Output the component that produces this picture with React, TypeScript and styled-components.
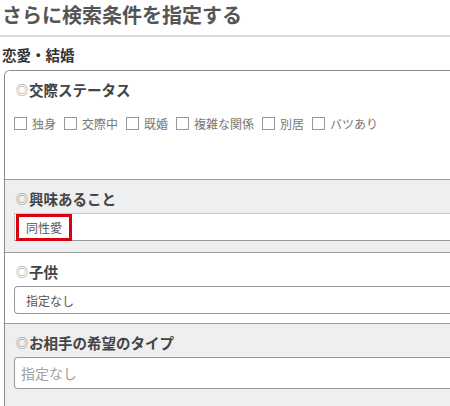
import * as React from 'react';
import styled, { createGlobalStyle } from 'styled-components';

const GlobalStyle = createGlobalStyle`
  html, body {
    margin: 0;
    padding: 0;
    background: #fff;
    overflow: hidden;
  }
  body {
    font-family: "Noto Sans CJK JP", "Noto Sans", sans-serif;
    color: #444;
  }
`;

const Page = styled.div`
  width: 450px;
  height: 406px;
  overflow: hidden;
`;

const Heading = styled.h2`
  margin: 0;
  height: 35px;
  padding-left: 2px;
  font-size: 20px;
  line-height: 30px;
  font-weight: bold;
  color: #555;
  border-bottom: 2px solid #d8d8d8;
`;

const GroupTitle = styled.h3`
  margin: 0;
  height: 33px;
  padding-left: 2px;
  font-size: 14.5px;
  line-height: 36px;
  font-weight: bold;
  color: #333;
`;

const Panel = styled.div`
  margin-left: 4px;
  border: 1px solid #8a8a8a;
  border-right: none;
  border-bottom: none;
  border-radius: 6px 0 0 0;
  overflow: hidden;
`;

const Section = styled.div<{ $shade?: boolean; $height: number }>`
  height: ${(p) => p.$height}px;
  box-sizing: border-box;
  padding: 7px 0 0 9px;
  background: ${(p) => (p.$shade ? '#eeeff1' : '#fff')};
  & + & {
    border-top: 1px solid #9a9a9a;
  }
`;

const SectionTitle = styled.div`
  display: flex;
  align-items: center;
  height: 22px;
  margin-bottom: 4px;
  padding-left: 2px;
  font-size: 14.5px;
  font-weight: bold;
  color: #444;
`;

const Mark = styled.span`
  font-size: 12px;
  color: #888;
  margin-right: 1px;
  font-weight: normal;
`;

const CheckRow = styled.div`
  display: flex;
  align-items: center;
  gap: 8px;
  margin-top: 15px;
`;

const CheckItem = styled.label`
  display: flex;
  align-items: center;
  gap: 5px;
  font-size: 12px;
  color: #777;
`;

const Box = styled.span`
  width: 13px;
  height: 13px;
  box-sizing: border-box;
  border: 1px solid #999;
  background: #fff;
`;

const Field = styled.div<{ $rounded?: boolean; $tall?: boolean; $placeholder?: boolean }>`
  position: relative;
  height: ${(p) => (p.$tall ? 32 : 28)}px;
  box-sizing: border-box;
  display: flex;
  align-items: center;
  padding-left: ${(p) => (p.$placeholder ? 6 : 11)}px;
  background: #fff;
  border: 1px solid ${(p) => (p.$rounded ? '#999' : '#c8c8c8')};
  border-bottom-color: #999;
  border-right: none;
  border-radius: ${(p) => (p.$rounded ? '4px 0 0 4px' : '0')};
  font-size: ${(p) => (p.$placeholder ? 14 : 12)}px;
  color: ${(p) => (p.$placeholder ? '#a0a0a0' : '#555')};
`;

const Highlight = styled.span`
  position: absolute;
  left: 1px;
  top: 0px;
  width: 56px;
  height: 27px;
  box-sizing: border-box;
  border: 3px solid #d9000f;
`;

const statuses = ['独身', '交際中', '既婚', '複雑な関係', '別居', 'バツあり'];

export default function App() {
  return (
    <Page>
      <GlobalStyle />
      <Heading>さらに検索条件を指定する</Heading>
      <GroupTitle>恋愛・結婚</GroupTitle>
      <Panel>
        <Section $height={108}>
          <SectionTitle>
            <Mark>◎</Mark>交際ステータス
          </SectionTitle>
          <CheckRow>
            {statuses.map((s) => (
              <CheckItem key={s}>
                <Box />
                {s}
              </CheckItem>
            ))}
          </CheckRow>
        </Section>
        <Section $shade $height={73}>
          <SectionTitle>
            <Mark>◎</Mark>興味あること
          </SectionTitle>
          <Field>
            同性愛
            <Highlight />
          </Field>
        </Section>
        <Section $height={71}>
          <SectionTitle>
            <Mark>◎</Mark>子供
          </SectionTitle>
          <Field $rounded>指定なし</Field>
        </Section>
        <Section $shade $height={90}>
          <SectionTitle>
            <Mark>◎</Mark>お相手の希望のタイプ
          </SectionTitle>
          <Field $rounded $tall $placeholder>
            指定なし
          </Field>
        </Section>
      </Panel>
    </Page>
  );
}
